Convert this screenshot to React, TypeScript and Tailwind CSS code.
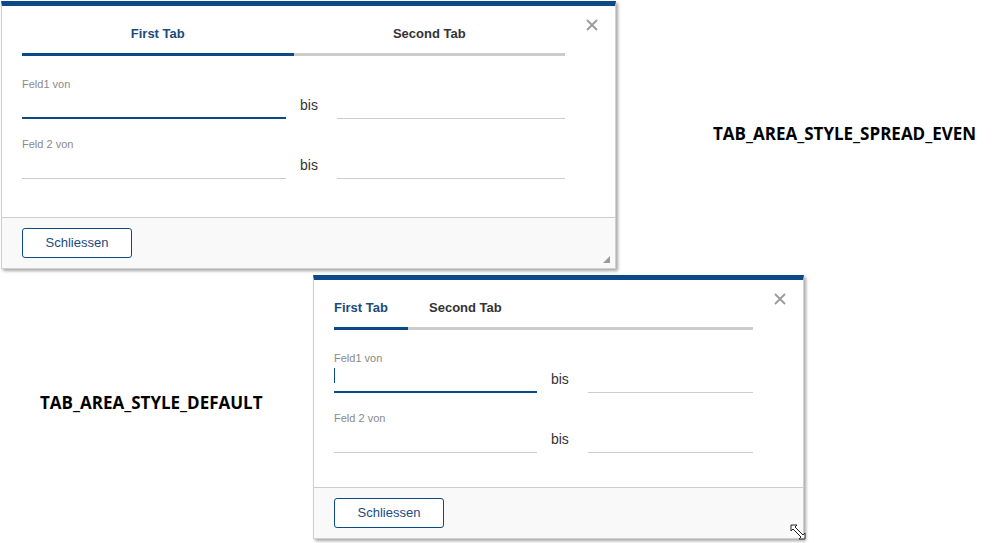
import { useState } from 'react';

const BLUE = '#0b4a87';

type DialogProps = {
  spread: boolean;
  className: string;
  firstWidth: string;
  secondWidth: string;
  bodyPad: string;
  showGrip: boolean;
  caret: boolean;
};

const CloseIcon = () => (
  <svg width="12" height="12" viewBox="0 0 12 12" className="absolute right-[17px] top-[13px]">
    <path d="M1 1 L11 11 M11 1 L1 11" stroke="#9a9a9a" strokeWidth="1.8" />
  </svg>
);

const Field = ({
  label,
  width,
  focused,
  caret,
}: {
  label?: string;
  width: string;
  focused?: boolean;
  caret?: boolean;
}) => (
  <div className={`flex flex-col ${width}`}>
    <span className="h-[14px] text-[11px] leading-[14px] text-[#8a8a8a]">{label ?? '\u00a0'}</span>
    <div
      className={`relative h-[28px] ${focused ? 'border-b-2 border-[#0b4a87]' : 'border-b border-[#cccccc]'}`}
    >
      {caret && <span className="absolute left-0 top-[3px] h-[15px] w-px bg-[#0b4a87]" />}
    </div>
  </div>
);

const Dialog = ({ spread, className, firstWidth, secondWidth, bodyPad, showGrip, caret }: DialogProps) => {
  const [active, setActive] = useState(0);
  const tabs = ['First Tab', 'Second Tab'];
  const rows = [
    { label: 'Feld1 von', focused: true },
    { label: 'Feld 2 von', focused: false },
  ];

  return (
    <div
      className={`absolute flex flex-col border border-[#d0d0d0] border-t-[5px] border-t-[#0b4a87] bg-white shadow-[2px_2px_3px_rgba(0,0,0,0.35)] ${className}`}
    >
      <CloseIcon />
      <div className={`pl-[20px] pr-[50px] ${bodyPad}`}>
        <div className="flex">
          {tabs.map((tab, i) => (
            <button
              key={tab}
              onClick={() => setActive(i)}
              className={`pt-[18px] pb-[9px] text-[13px] leading-5 font-bold border-b-[3px] ${
                spread ? 'flex-1 text-center' : i === 0 ? 'w-[74px] text-left' : 'flex-1 pl-[21px] text-left'
              } ${i === active ? 'border-[#0b4a87] text-[#1a4a80]' : 'border-[#cccccc] text-[#333333]'}`}
            >
              {tab}
            </button>
          ))}
        </div>

        <div className="mt-[21px] flex flex-col gap-[18px]">
          {rows.map((row) => (
            <div key={row.label} className="flex items-end">
              <Field label={row.label} width={firstWidth} focused={row.focused} caret={caret && row.focused} />
              <span className="mx-[14px] h-[28px] w-[23px] text-[14px] leading-[28px] text-[#333333]">bis</span>
              <Field width={secondWidth} />
            </div>
          ))}
        </div>
      </div>

      <div className="relative border-t border-[#cccccc] bg-[#f9f9f9] px-[20px] py-[10px]">
        <button
          className="h-[30px] w-[110px] rounded-[3px] border bg-white text-[13px] text-[#1a4a80]"
          style={{ borderColor: BLUE }}
        >
          Schliessen
        </button>
        {showGrip && (
          <svg width="7" height="7" viewBox="0 0 7 7" className="absolute bottom-[5px] right-[5px]">
            <path d="M7 0 L7 7 L0 7 Z" fill="#9a9a9a" />
          </svg>
        )}
      </div>
    </div>
  );
};

const ResizeCursor = () => (
  <svg width="18" height="18" viewBox="0 0 18 18" className="absolute left-[790px] top-[524px]">
    <path
      d="M1 1 L7 1 L5 3 L13 11 L15 9 L15 15 L9 15 L11 13 L3 5 L1 7 Z"
      fill="white"
      stroke="#222"
      strokeWidth="1"
      strokeLinejoin="miter"
    />
  </svg>
);

export default function App() {
  return (
    <div className="relative h-[543px] w-[1003px] overflow-hidden bg-white font-['Liberation_Sans',Arial,sans-serif]">
      <Dialog
        spread
        className="left-[1px] top-[1px] w-[615px] h-[268px]"
        firstWidth="w-[264px]"
        secondWidth="w-[228px]"
        bodyPad="pb-[38px]"
        showGrip
        caret={false}
      />
      <Dialog
        spread={false}
        className="left-[313px] top-[275px] w-[491px] h-[264px]"
        firstWidth="w-[204px]"
        secondWidth="w-[166px]"
        bodyPad="pb-[34px]"
        showGrip={false}
        caret
      />
      <ResizeCursor />

      <span className="absolute left-[713px] top-[122px] text-[17px] font-bold leading-6 text-black font-['Open_Sans',sans-serif]">
        TAB_AREA_STYLE_SPREAD_EVEN
      </span>
      <span className="absolute left-[40px] top-[391px] text-[17px] font-bold leading-6 text-black font-['Open_Sans',sans-serif]">
        TAB_AREA_STYLE_DEFAULT
      </span>
    </div>
  );
}
